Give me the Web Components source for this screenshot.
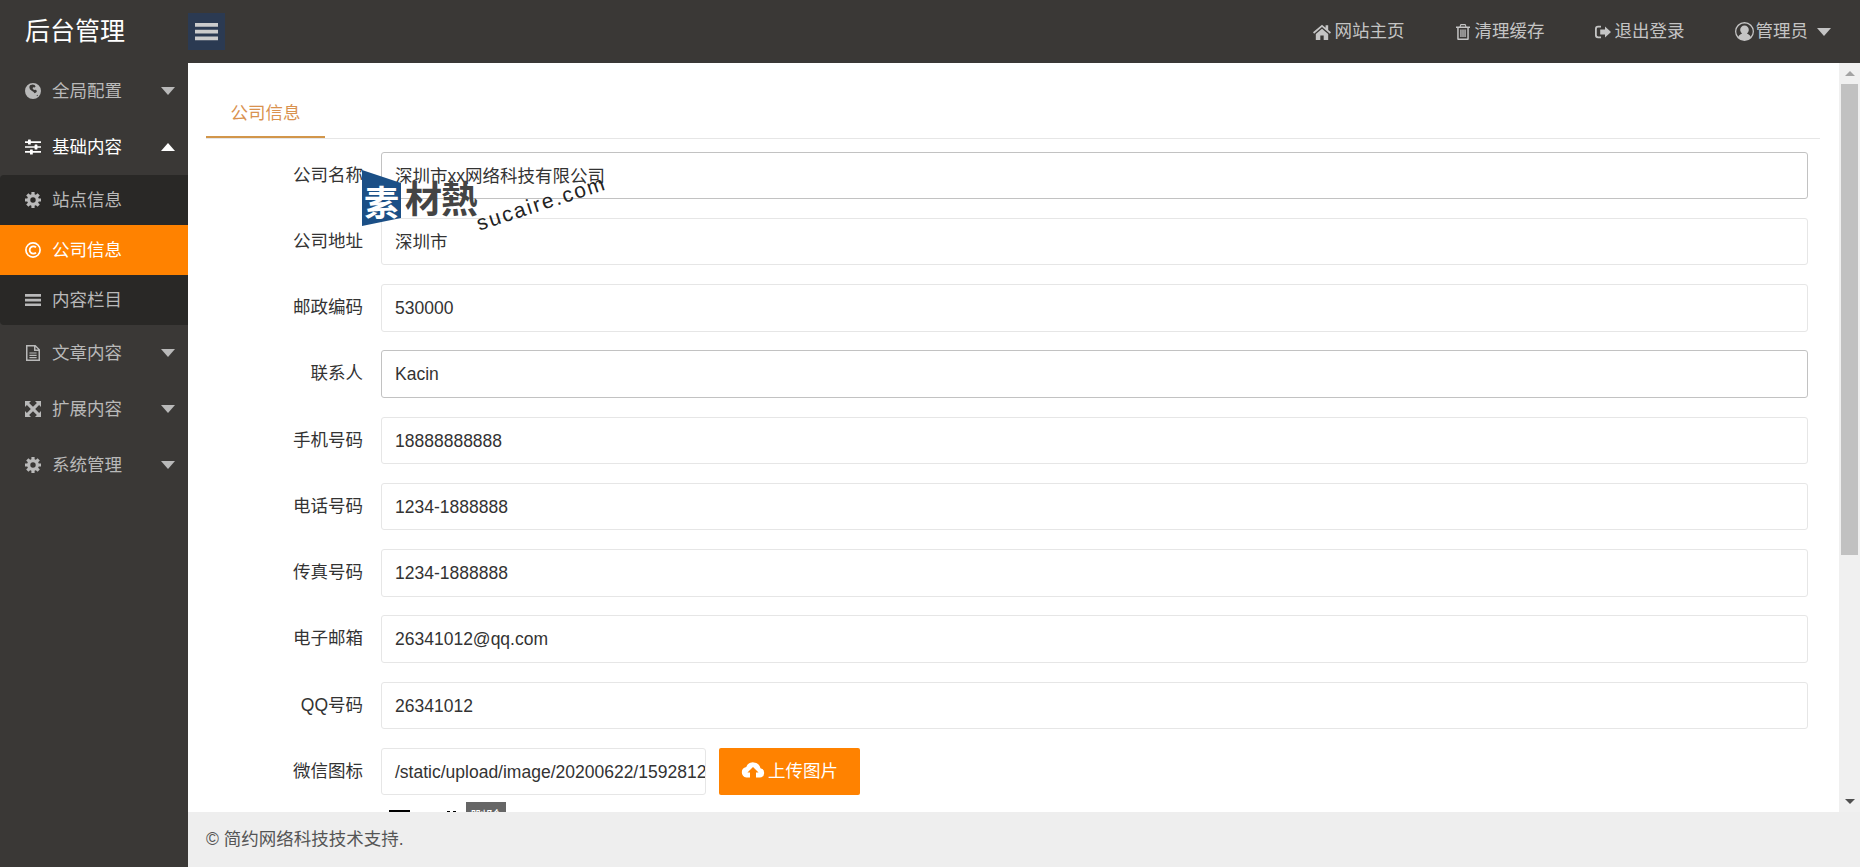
<!DOCTYPE html>
<html lang="zh">
<head>
<meta charset="utf-8">
<title>后台管理</title>
<style>
  html, body { margin: 0; height: 100%; overflow: hidden; }
  body { font: 17.5px/1.4 "Liberation Sans", "Noto Sans CJK SC", sans-serif; color: #333; }
</style>
</head>
<body>
<admin-shell>
  <top-bar slot="top"></top-bar>
  <side-nav slot="side">
    <nav-item icon="globe" caret="down">全局配置</nav-item>
    <nav-item icon="sliders" caret="up" open>基础内容</nav-item>
    <nav-group>
      <nav-item icon="cog" sub>站点信息</nav-item>
      <nav-item icon="copyright" sub active>公司信息</nav-item>
      <nav-item icon="bars" sub>内容栏目</nav-item>
    </nav-group>
    <nav-item icon="file" caret="down">文章内容</nav-item>
    <nav-item icon="expand" caret="down">扩展内容</nav-item>
    <nav-item icon="cog" caret="down">系统管理</nav-item>
  </side-nav>
  <form-panel slot="main">
    <tab-bar>公司信息</tab-bar>
    <form-row label="公司名称" strong>深圳市xx网络科技有限公司</form-row>
    <form-row label="公司地址">深圳市</form-row>
    <form-row label="邮政编码">530000</form-row>
    <form-row label="联系人" strong>Kacin</form-row>
    <form-row label="手机号码">18888888888</form-row>
    <form-row label="电话号码">1234-1888888</form-row>
    <form-row label="传真号码">1234-1888888</form-row>
    <form-row label="电子邮箱">26341012@qq.com</form-row>
    <form-row label="QQ号码">26341012</form-row>
    <upload-row label="微信图标" value="/static/upload/image/20200622/1592812"></upload-row>
    <thumb-preview></thumb-preview>
  </form-panel>
  <fake-scrollbar slot="main"></fake-scrollbar>
  <page-foot slot="foot">© 简约网络科技技术支持.</page-foot>
</admin-shell>
<water-mark></water-mark>

<script>
// FontAwesome-ish glyphs, redrawn by hand on a 16 box
const ICONS = {
  globe: `<path fill-rule="evenodd" d="M8 0a8 8 0 1 0 0 16A8 8 0 0 0 8 0zM5 2.2l2.6-.7 2 .5 1 1.6-1 1-1.4-.4-.7 1.1 1.4 1.7 1.8-.2 1.3 1.3-.9 1.5-1.6.6-.9-1.2-1.9-1.2-1.8-1.6L4.300 4.100zM11.600 12.300l1-.5.300.7-.9.8z"/>`,
  sliders: `<path d="M0 2.300h16v1.600H0zM0 7.200h16v1.600H0zM0 12.100h16v1.600H0z"/><rect x="3" y=".6" width="2.800" height="5" rx=".5"/><rect x="9.600" y="5.500" width="2.800" height="5" rx=".5"/><rect x="5" y="10.400" width="2.800" height="5" rx=".5"/>`,
  cog: `<path fill="none" stroke="currentColor" stroke-width="3.200" d="M8 0v3M8 13v3M0 8h3M13 8h3M2.300 2.300l2.200 2.200M11.500 11.500l2.200 2.200M13.700 2.300l-2.200 2.200M4.500 11.500l-2.200 2.200"/><circle cx="8" cy="8" r="4.300" fill="none" stroke="currentColor" stroke-width="3.200"/>`,
  copyright: `<circle cx="8" cy="8" r="7.100" fill="none" stroke="currentColor" stroke-width="1.700"/><path fill="none" stroke="currentColor" stroke-width="1.800" d="M11 5.400A3.700 3.700 0 1 0 11 10.600"/>`,
  bars: `<path d="M0 2h16v2.700H0zM0 6.700h16v2.700H0zM0 11.400h16v2.700H0z"/>`,
  file: `<path fill-rule="evenodd" d="M1 0h9.500L15 4.500V16H1zM2.500 1.500v13h11V6H9V1.500zM10.500 1.900V4.500h2.600z"/><path d="M4.400 7.400h7.200v1.200H4.400zM4.400 9.700h7.200v1.200H4.400zM4.400 12h7.200v1.200H4.400z"/>`,
  expand: `<path d="M0 0h6L4.100 1.900 6.400 4.200 8 5.800 9.600 4.200 11.900 1.900 10 0h6v6L14.100 4.100 10.200 8l3.900 3.900L16 10v6h-6l1.900-1.900L8 10.200l-3.900 3.900L6 16H0v-6l1.900 1.900L5.800 8 1.900 4.100 0 6z"/>`,
  home: `<path d="M8 1.500 0 8.300l1 1.200L8 3.600l7 5.900 1-1.200-2.500-2.100V2h-2.300v2.300zM2.500 9.700V15h4V11h3v4h4V9.700L8 5z"/>`,
  trash: `<path fill-rule="evenodd" d="M5.500 0h5l1 2.400H15v1.500h-1.200V15a1 1 0 0 1-1 1H3.200a1 1 0 0 1-1-1V3.900H1V2.400h3.500zM6.100 1.300l-.4 1.100h4.600l-.4-1.100zM3.700 3.900v10.600h8.600V3.900z"/><path d="M5.300 5.500h1.300v7.500H5.300zM7.350 5.500h1.300v7.500h-1.300zM9.400 5.500h1.300v7.500H9.400z"/>`,
  signout: `<path d="M6 1.800H3A3 3 0 0 0 0 4.800v6.400a3 3 0 0 0 3 3h3v-1.700H3.200a1.400 1.400 0 0 1-1.400-1.400V5a1.400 1.400 0 0 1 1.400-1.400H6zM10 2.600 16 8l-6 5.400v-3H5.200V5.600H10z"/>`,
  user: `<path fill-rule="evenodd" d="M8 0a8 8 0 1 0 0 16A8 8 0 0 0 8 0zm0 1.200a6.800 6.800 0 0 1 5.200 11.200c-.7-1.500-2-2.500-3.200-2.800a3.600 3.600 0 1 0-4 0c-1.200.3-2.500 1.300-3.200 2.800A6.800 6.800 0 0 1 8 1.200z"/>`,
  cloud: `<path fill-rule="evenodd" d="M13 6.200A5 5 0 0 0 3.500 5.300 3.600 3.600 0 0 0 3.600 12.400H6V9H4.300L8 5.300 11.700 9H10v3.400h2.600a3.150 3.150 0 0 0 .4-6.200z"/>`
};

class UiIcon extends HTMLElement {
  constructor() {
    super();
    this.attachShadow({ mode: "open" });
  }
  connectedCallback() {
    const size = this.getAttribute("size") ?? "16";
    const glyph = ICONS[this.getAttribute("name")] ?? "";
    this.shadowRoot.innerHTML = `
      <style>
        :host { display: inline-flex; flex: none; }
        svg { display: block; fill: currentColor; }
      </style>
      <svg width="${size}" height="${size}" viewBox="0 0 16 16">${glyph}</svg>`;
  }
}

class AdminShell extends HTMLElement {
  constructor() {
    super();
    this.attachShadow({ mode: "open" }).innerHTML = `
      <style>
        :host {
          display: grid;
          grid-template: 63px 1fr 55px / 188px 1fr;
          height: 867px;
          background: #3a3836;
        }
        .logo {
          font-size: 25px;
          color: #fff;
          padding-left: 25px;
          line-height: 63px;
        }
        .side { grid-row: 2 / 4; min-height: 0; }
        .main { display: flex; min-height: 0; overflow: hidden; background: #fff; }
      </style>
      <div class="logo">后台管理</div>
      <slot name="top"></slot>
      <div class="side"><slot name="side"></slot></div>
      <div class="main"><slot name="main"></slot></div>
      <slot name="foot"></slot>`;
  }
}

class TopBar extends HTMLElement {
  constructor() {
    super();
    this.attachShadow({ mode: "open" }).innerHTML = `
      <style>
        :host {
          display: flex;
          align-items: center;
          justify-content: space-between;
          color: #c4c4c4;
          padding-right: 29px;
        }
        .toggle {
          width: 37px;
          height: 37px;
          background: #2b3a52;
          color: #ccc;
          display: flex;
          align-items: center;
          justify-content: center;
        }
        .links { display: flex; align-items: center; gap: 50px; }
        .link { display: flex; align-items: center; gap: 4px; white-space: nowrap; }
        .tight { gap: 2px; }
        .caret {
          border: 7px solid transparent;
          border-top: 8px solid #c4c4c4;
          border-bottom: 0;
          margin-left: 7px;
        }
      </style>
      <div class="toggle"><ui-icon name="bars" size="23"></ui-icon></div>
      <div class="links">
        <div class="link"><ui-icon name="home" size="18"></ui-icon>网站主页</div>
        <div class="link"><ui-icon name="trash" size="16"></ui-icon>清理缓存</div>
        <div class="link"><ui-icon name="signout" size="16"></ui-icon>退出登录</div>
        <div class="link tight"><ui-icon name="user" size="19"></ui-icon>管理员<span class="caret"></span></div>
      </div>`;
  }
}

class SideNav extends HTMLElement {
  constructor() {
    super();
    this.attachShadow({ mode: "open" }).innerHTML = `
      <style>:host { display: block; }</style>
      <slot></slot>`;
  }
}

class NavGroup extends HTMLElement {
  constructor() {
    super();
    this.attachShadow({ mode: "open" }).innerHTML = `
      <style>:host { display: block; background: #292826; border-radius: 4px 0 0 4px; overflow: hidden; }</style>
      <slot></slot>`;
  }
}

class NavItem extends HTMLElement {
  constructor() {
    super();
    this.attachShadow({ mode: "open" });
  }
  connectedCallback() {
    const caret = this.getAttribute("caret");
    this.shadowRoot.innerHTML = `
      <style>
        :host {
          display: flex;
          align-items: center;
          height: 56px;
          padding: 0 13px 0 25px;
          gap: 11px;
          color: #b9b9b9;
        }
        :host([sub]) { height: 50px; }
        :host([open]) { color: #fff; }
        :host([active]) { background: #ff8200; color: #fff; }
        .label { flex: 1; white-space: nowrap; }
        .caret { width: 0; height: 0; border: 7.500px solid transparent; }
        .down { border-top: 8px solid currentColor; border-bottom: 0; }
        .up { border-bottom: 8px solid currentColor; border-top: 0; }
      </style>
      <ui-icon name="${this.getAttribute("icon")}"></ui-icon>
      <span class="label"><slot></slot></span>
      ${caret ? `<span class="caret ${caret}"></span>` : ""}`;
  }
}

class FormPanel extends HTMLElement {
  constructor() {
    super();
    this.attachShadow({ mode: "open" }).innerHTML = `
      <style>
        :host {
          display: block;
          flex: 1;
          min-width: 0;
          padding: 25px 19px 0 18px;
          overflow: hidden;
        }
      </style>
      <slot></slot>`;
  }
}

class TabBar extends HTMLElement {
  constructor() {
    super();
    this.attachShadow({ mode: "open" }).innerHTML = `
      <style>
        :host {
          display: flex;
          height: 50px;
          border-bottom: 1px solid #e6e6e6;
          margin-bottom: 12.500px;
          box-sizing: content-box;
        }
        .tab {
          width: 119px;
          height: 50px;
          box-sizing: border-box;
          margin-bottom: -1px;
          border-bottom: 2px solid #d2964a;
          padding-top: 13px;
          text-align: center;
          color: #d9924f;
        }
      </style>
      <div class="tab"><slot></slot></div>`;
  }
}

const ROW_CSS = `
  :host {
    display: grid;
    grid-template-columns: 157px 1fr;
    column-gap: 18px;
    align-items: center;
    margin: 0 12px 18.750px 0;
  }
  .label { text-align: right; color: #333; margin-top: -1px; }
  .box {
    height: 47.500px;
    box-sizing: border-box;
    border: 1px solid #e6e6e6;
    border-radius: 3px;
    padding-left: 13px;
    line-height: 46px;
    color: #333;
    background: #fff;
    white-space: nowrap;
    overflow: hidden;
  }
`;

class FormRow extends HTMLElement {
  constructor() {
    super();
    this.attachShadow({ mode: "open" });
  }
  connectedCallback() {
    this.shadowRoot.innerHTML = `
      <style>
        ${ROW_CSS}
        :host([strong]) .box { border-color: #c2c2c2; }
      </style>
      <div class="label">${this.getAttribute("label")}</div>
      <div class="box"><slot></slot></div>`;
  }
}

class UploadRow extends HTMLElement {
  constructor() {
    super();
    this.attachShadow({ mode: "open" });
  }
  connectedCallback() {
    this.shadowRoot.innerHTML = `
      <style>
        ${ROW_CSS}
        :host { margin-bottom: 6.500px; }
        .line { display: flex; gap: 13px; }
        .box { width: 325px; }
        .btn {
          width: 141px;
          height: 47px;
          box-sizing: border-box;
          background: #ff8200;
          color: #fff;
          border-radius: 2px;
          display: flex;
          align-items: center;
          justify-content: center;
          gap: 3px;
        }
      </style>
      <div class="label">${this.getAttribute("label")}</div>
      <div class="line">
        <div class="box">${this.getAttribute("value")}</div>
        <div class="btn"><ui-icon name="cloud" size="24"></ui-icon>上传图片</div>
      </div>`;
  }
}

class ThumbPreview extends HTMLElement {
  constructor() {
    super();
    this.attachShadow({ mode: "open" }).innerHTML = `
      <style>
        :host { display: flex; align-items: flex-start; margin-left: 175px; padding-left: 8px; }
        svg { display: block; flex: none; }
        .del {
          background: #666;
          color: #fff;
          width: 40px;
          height: 26px;
          font-size: 16px;
          line-height: 26px;
          padding-top: 3px;
          box-sizing: border-box;
          text-align: center;
          overflow: hidden;
        }
      </style>
      <svg width="77" height="60" viewBox="0 0 77 60">
        <path d="M0 8h21v4H0zM27 10h6v6h-6zM58 9h3v6h-3zM64 9h3v6h-3z"/>
      </svg>
      <div class="del">删除</div>`;
  }
}

class FakeScrollbar extends HTMLElement {
  constructor() {
    super();
    this.attachShadow({ mode: "open" }).innerHTML = `
      <style>
        :host {
          display: flex;
          flex-direction: column;
          align-items: center;
          flex: none;
          width: 21px;
          background: #f0f0f0;
        }
        .btn { height: 21px; flex: none; display: flex; align-items: center; justify-content: center; }
        .up { width: 0; border: 5px solid transparent; border-bottom: 5px solid #a3a3a3; border-top: 0; }
        .down { width: 0; border: 5px solid transparent; border-top: 5px solid #505050; border-bottom: 0; }
        .track { flex: 1; align-self: stretch; padding: 0 2px; }
        .thumb { height: 471px; background: #c1c1c1; }
      </style>
      <div class="btn"><span class="up"></span></div>
      <div class="track"><div class="thumb"></div></div>
      <div class="btn"><span class="down"></span></div>`;
  }
}

class PageFoot extends HTMLElement {
  constructor() {
    super();
    this.attachShadow({ mode: "open" }).innerHTML = `
      <style>
        :host {
          display: flex;
          align-items: center;
          background: #eee;
          color: #555;
          padding-left: 18px;
        }
      </style>
      <slot></slot>`;
  }
}

// the stock-site stamp that sits over the first form rows
class WaterMark extends HTMLElement {
  constructor() {
    super();
    this.attachShadow({ mode: "open" }).innerHTML = `
      <style>
        :host { position: absolute; left: 362px; top: 170px; width: 250px; height: 70px; pointer-events: none; }
        svg { position: absolute; left: 0; top: 0; }
        .su, .cai {
          position: absolute;
          font-family: "Noto Sans CJK SC", sans-serif;
          font-weight: 700;
          line-height: 1;
        }
        .su { left: 2px; top: 13px; font-size: 35px; color: #fff; }
        .cai { left: 43px; top: 9px; font-size: 37px; color: #444; white-space: nowrap; letter-spacing: -1px; }
        .url {
          position: absolute;
          left: 115px;
          top: 43px;
          font: 21px/1 "Liberation Sans", sans-serif;
          letter-spacing: 2px;
          color: #222;
          white-space: nowrap;
          transform: rotate(-18deg);
          transform-origin: left center;
        }
      </style>
      <svg width="42" height="60" viewBox="0 0 42 60"><path d="M0 0 39 13V48L0 56z" fill="#1b4f86"/></svg>
      <span class="su">素</span>
      <span class="cai">材熱</span>
      <span class="url">sucaire.com</span>`;
  }
}

customElements.define("ui-icon", UiIcon);
customElements.define("admin-shell", AdminShell);
customElements.define("top-bar", TopBar);
customElements.define("side-nav", SideNav);
customElements.define("nav-group", NavGroup);
customElements.define("nav-item", NavItem);
customElements.define("form-panel", FormPanel);
customElements.define("tab-bar", TabBar);
customElements.define("form-row", FormRow);
customElements.define("upload-row", UploadRow);
customElements.define("thumb-preview", ThumbPreview);
customElements.define("fake-scrollbar", FakeScrollbar);
customElements.define("page-foot", PageFoot);
customElements.define("water-mark", WaterMark);
</script>
</body>
</html>
